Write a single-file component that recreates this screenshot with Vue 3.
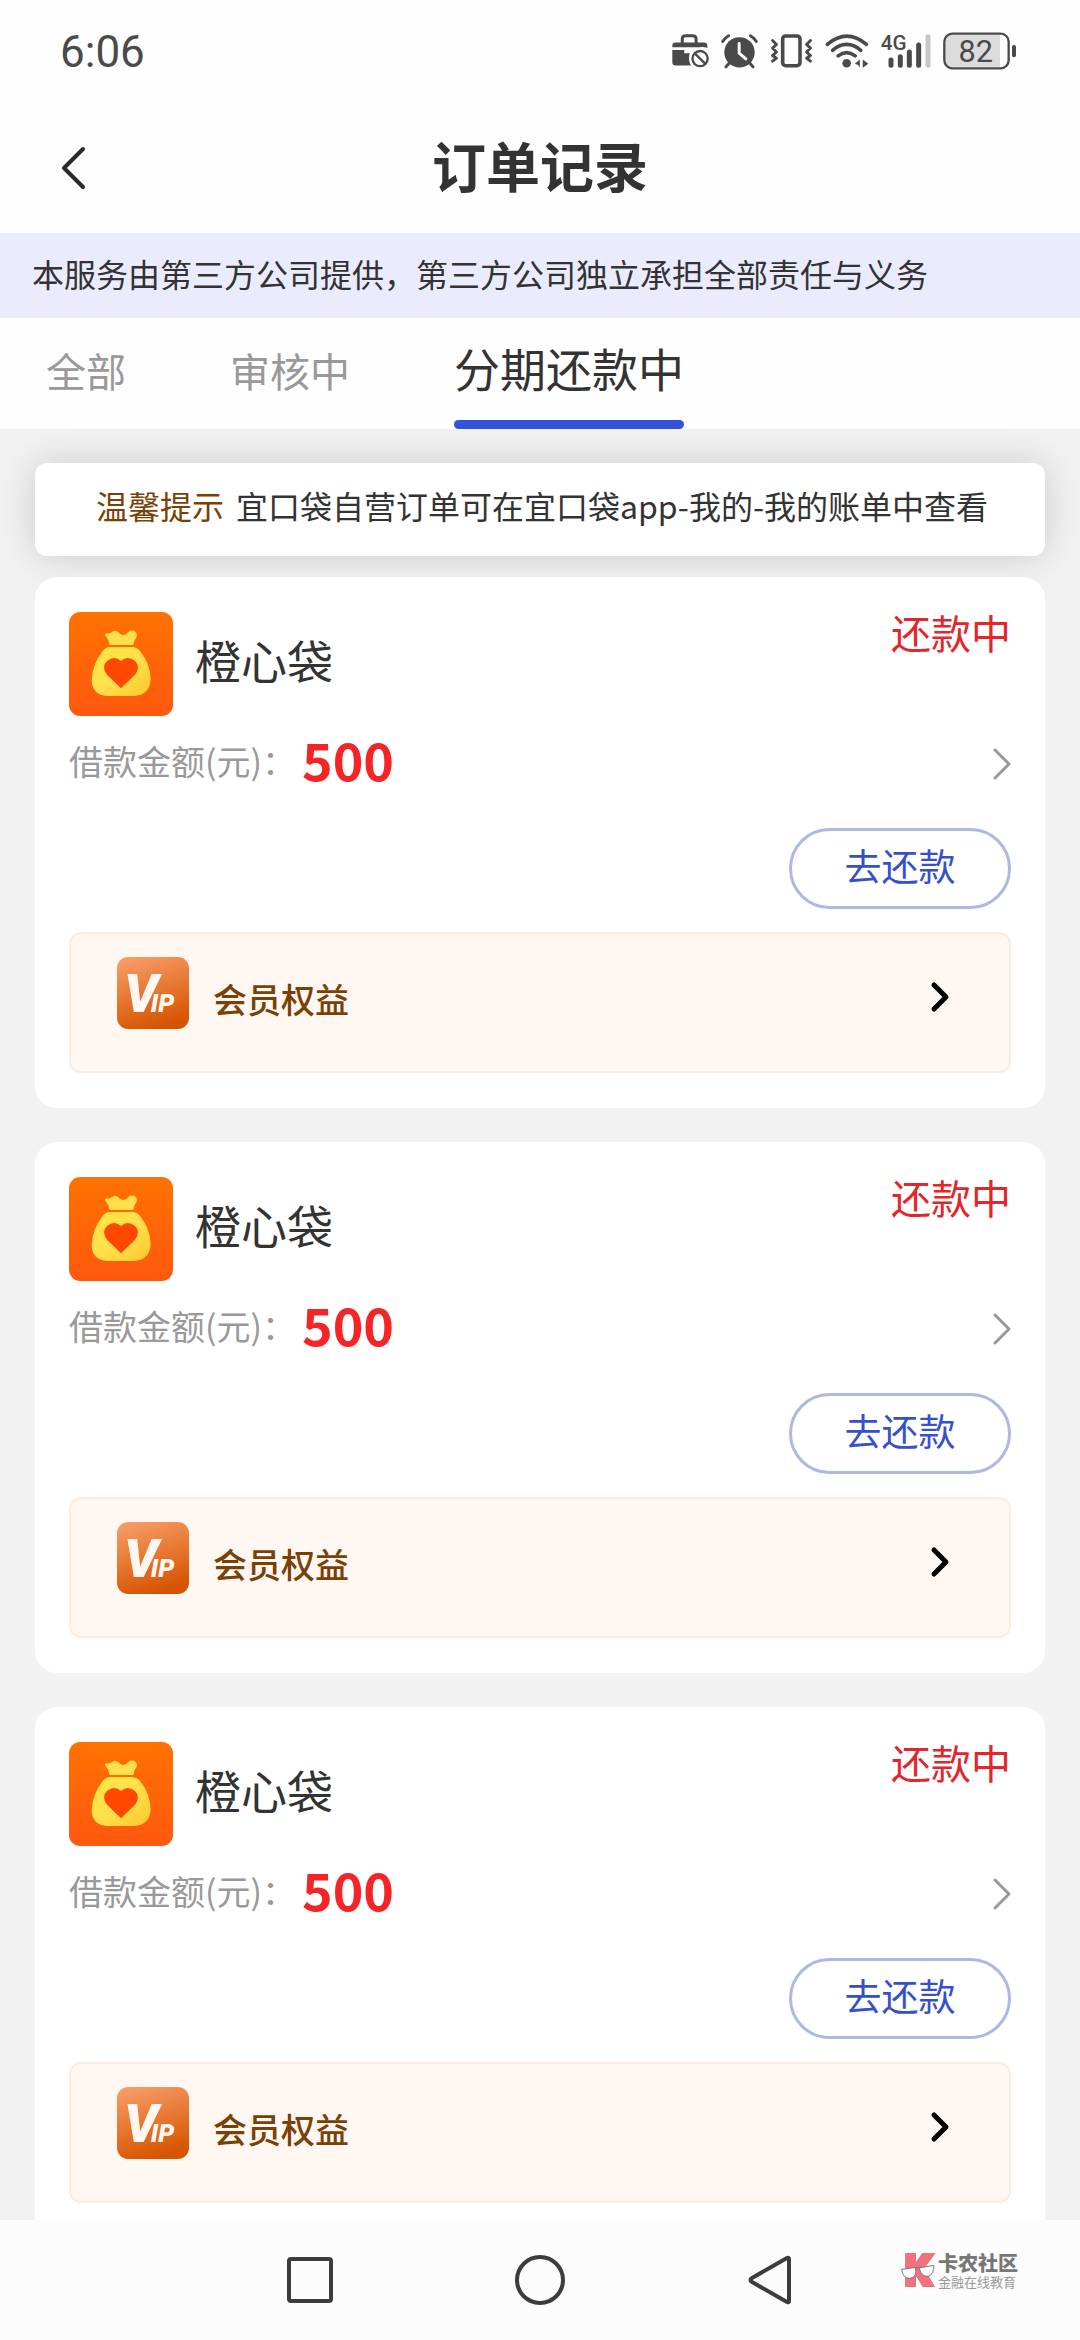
<script setup>
import { ref } from 'vue'

const tabs = ref([
  { id: 'all', label: '全部' },
  { id: 'review', label: '审核中' },
  { id: 'repaying', label: '分期还款中' },
])
const currentTab = ref('repaying')

const orders = ref([
  { id: 1, name: '橙心袋', amount: 500, status: '还款中' },
  { id: 2, name: '橙心袋', amount: 500, status: '还款中' },
  { id: 3, name: '橙心袋', amount: 500, status: '还款中' },
])

function selectTab(id) {
  currentTab.value = id
}
</script>

<template>
  <div class="page">
    <div class="status-bar">
      <span class="time">6:06</span>
      <div class="status-icons">
        <svg class="ic-case" viewBox="98 73 112 102">
          <path d="M129 100V88q0-10 10-10h22q10 0 10 10v12" fill="none" stroke="#4a4a4a" stroke-width="9" />
          <path d="M99 115v-7q0-10 10-10h86q10 0 10 10v7q-12-5-24-2h-82z" fill="#4a4a4a" />
          <path d="M99 121h36v10h17q-7 18 3 37h-46q-10 0-10-10z" fill="#4a4a4a" />
          <circle cx="183" cy="147" r="23" fill="none" stroke="#4a4a4a" stroke-width="7" />
          <path d="M167 131l32 32" stroke="#4a4a4a" stroke-width="7" />
        </svg>
        <svg class="ic-alarm" viewBox="245 70 112 102">
          <circle cx="301" cy="125" r="46" fill="#4a4a4a" />
          <path d="M250 92q6-10 18-17M352 92q-6-10-18-17M272 155l-12 14M330 155l12 14" fill="none" stroke="#4a4a4a" stroke-width="9" stroke-linecap="round" />
          <path d="M300 98v29l20 18" fill="none" stroke="#fff" stroke-width="9" stroke-linecap="round" />
        </svg>
        <svg class="ic-vibrate" viewBox="388 70 130 104">
          <rect x="426" y="76" width="53" height="91" rx="9" fill="none" stroke="#4a4a4a" stroke-width="11" />
          <path d="M395 90l12 12-12 11 12 12-12 11 12 8-12 9M511 90l-12 12 12 11-12 12 12 11-12 8 12 9" fill="none" stroke="#4a4a4a" stroke-width="9" stroke-linejoin="round" stroke-linecap="round" />
        </svg>
        <svg class="ic-wifi" viewBox="552 70 134 102">
          <path d="M559 101q60-50 119 0M575 119q43-36 86 0M592 136q26-20 52 0" fill="none" stroke="#4a4a4a" stroke-width="11" stroke-linecap="round" />
          <circle cx="618" cy="158" r="13" fill="#4a4a4a" />
          <path d="M643 160l15-13v24l-5-7zM667 147l17 13-17 12z" fill="#4a4a4a" />
        </svg>
        <svg class="ic-signal" viewBox="720 68 150 106">
          <text x="719" y="119" class="net-label">4G</text>
          <path d="M750 148v16M778 138v26M805 124v40M833 103v61" stroke="#4a4a4a" stroke-width="15" stroke-linecap="round" />
          <path d="M861 78v86" stroke="#c8c8c8" stroke-width="15" stroke-linecap="round" />
        </svg>
        <svg class="ic-battery" viewBox="905 65 222 112">
          <path d="M930 72h146v98h-146q-18 0-18-20V92q0-20 18-20z" fill="#dcdcdc" />
          <rect x="909" y="69" width="193" height="104" rx="24" fill="none" stroke="#4a4a4a" stroke-width="7" />
          <path d="M1118 109v25" stroke="#4a4a4a" stroke-width="12" stroke-linecap="round" />
          <text x="1003" y="155" text-anchor="middle" class="battery-label">82</text>
        </svg>
      </div>
    </div>

    <header class="header">
      <button class="back" aria-label="返回">
        <svg viewBox="0 0 26 44">
          <path d="M23 3L4 22L23 41" fill="none" stroke="#2a2a2a" stroke-width="4" stroke-linecap="round" stroke-linejoin="round" />
        </svg>
      </button>
      <h1>订单记录</h1>
    </header>

    <p class="notice">本服务由第三方公司提供，第三方公司独立承担全部责任与义务</p>

    <nav class="tabs">
      <button v-for="tab in tabs" :key="tab.id" :class="{ tab: true, active: currentTab === tab.id }" @click="selectTab(tab.id)">
        {{ tab.label }}
      </button>
    </nav>

    <main class="content">
      <p class="tip"><span class="tip-title">温馨提示</span>宜口袋自营订单可在宜口袋app-我的-我的账单中查看</p>

      <section v-for="order in orders" :key="order.id" class="card">
        <div class="card-head">
          <svg class="logo" viewBox="27 36 312 312">
            <defs>
              <linearGradient id="logoBg" x1="0" y1="0" x2="0" y2="1">
                <stop offset="0" stop-color="#ff7200" />
                <stop offset="1" stop-color="#ff580f" />
              </linearGradient>
              <linearGradient id="bag" x1="0" y1="0" x2="1" y2="1">
                <stop offset="0" stop-color="#ffe640" />
                <stop offset="0.5" stop-color="#ffe04c" />
                <stop offset="1" stop-color="#ffc62c" />
              </linearGradient>
            </defs>
            <rect x="27" y="36" width="312" height="312" rx="34" fill="url(#logoBg)" />
            <path d="M148 133q-1-14-12-26q-3-6 4-7q10 2 15-3q8-8 18-2q10 11 18 10q9 0 14-9q8-7 18-3q10 5 7 17q-9 12-9 23q-1 2-5 2h-63q-5 0-5-2z" fill="#ffe04c" />
            <path d="M150 141h68q12 0 22 12q31 38 32 85q-2 46-48 50h-82q-46-3-47-48q2-47 33-87q9-12 22-12z" fill="url(#bag)" />
            <path d="M183 265l-42-41q-18-24 0-41q22-18 42 0q20-18 42 0q18 17 0 41z" fill="#ff4800" />
          </svg>
          <h2>{{ order.name }}</h2>
          <span class="state">{{ order.status }}</span>
        </div>

        <a href="#" class="amount-row">
          <span class="amount-label">借款金额(元)：</span>
          <strong class="amount">{{ order.amount }}</strong>
          <svg class="arrow" viewBox="0 0 18 32">
            <path d="M2 2L16 16L2 30" fill="none" stroke="#999" stroke-width="3" stroke-linecap="round" stroke-linejoin="round" />
          </svg>
        </a>

        <div class="actions">
          <button class="repay">去还款</button>
        </div>

        <a href="#" class="vip">
          <svg class="vip-icon" viewBox="51 51 216 216">
            <defs>
              <linearGradient id="vipBg" x1="0.2" y1="0" x2="0.5" y2="1">
                <stop offset="0" stop-color="#f89c66" />
                <stop offset="1" stop-color="#d65400" />
              </linearGradient>
            </defs>
            <rect x="51" y="51" width="216" height="216" rx="34" fill="url(#vipBg)" />
            <text x="72" y="217" class="vip-big">V<tspan dx="-22" class="vip-small">IP</tspan></text>
          </svg>
          <span class="vip-text">会员权益</span>
          <svg class="vip-arrow" viewBox="0 0 18 30">
            <path d="M3 3L15 15L3 27" fill="none" stroke="#000" stroke-width="5" stroke-linecap="round" stroke-linejoin="round" />
          </svg>
        </a>
      </section>
    </main>

    <footer class="sys-nav">
      <button aria-label="最近任务">
        <svg viewBox="0 0 52 52">
          <rect x="5" y="5" width="42" height="42" rx="2" fill="none" stroke="#3c3c3c" stroke-width="4" />
        </svg>
      </button>
      <button aria-label="主页">
        <svg viewBox="0 0 52 52">
          <circle cx="26" cy="26" r="23" fill="none" stroke="#3c3c3c" stroke-width="4" />
        </svg>
      </button>
      <button aria-label="后退">
        <svg viewBox="0 0 52 52">
          <path d="M45 5V47Q45 49 43 48L8 28Q5 26 8 24L43 4Q45 3 45 5Z" fill="none" stroke="#3c3c3c" stroke-width="4" stroke-linejoin="round" />
        </svg>
      </button>
      <div class="watermark">
        <svg viewBox="118 156 106 110">
          <text x="132" y="255" class="wm-k">K</text>
          <path d="M122 206l43-6q6 30-18 34q-20 0-25-28zM176 201l45-7q0 28-17 33q-21 3-28-26z" fill="#fcfcfc" stroke="#777" stroke-width="3" />
          <path d="M165 203q5-5 11-1" fill="none" stroke="#777" stroke-width="3" />
        </svg>
        <div>
          <div class="wm-name">卡农社区</div>
          <div class="wm-sub">金融在线教育</div>
        </div>
      </div>
    </footer>
  </div>
</template>

<style>
body {
  background: #f2f2f2;
}
</style>

<style scoped>
.page {
  display: flex;
  flex-direction: column;
  height: 100vh;
  font-family: "Noto Sans CJK SC", sans-serif;
  color: #333;
}
button {
  border: 0;
  padding: 0;
  background: none;
  font-family: inherit;
  cursor: pointer;
}
a {
  color: inherit;
  text-decoration: none;
}
h1, h2, p {
  margin: 0;
}
svg {
  display: block;
  flex: none;
  overflow: visible;
}

.status-bar {
  display: flex;
  align-items: center;
  justify-content: space-between;
  height: 102px;
  padding: 0 63px 0 60px;
  background: #fefefe;
}
.time {
  padding-top: 2px;
  font-family: Roboto, sans-serif;
  font-size: 44px;
  color: #4a4a4a;
}
.status-icons {
  display: flex;
  align-items: center;
  gap: 12px;
}
.ic-case, .ic-alarm {
  width: 37px;
  height: 34px;
}
.ic-vibrate {
  width: 43px;
  height: 34px;
}
.ic-wifi {
  width: 44px;
  height: 34px;
}
.ic-signal {
  width: 50px;
  height: 36px;
}
.ic-battery {
  width: 74px;
  height: 38px;
}
.net-label {
  font-family: Roboto, sans-serif;
  font-size: 62px;
  font-weight: 500;
  fill: #4a4a4a;
}
.battery-label {
  font-family: Roboto, sans-serif;
  font-size: 92px;
  fill: #4a4a4a;
}

.header {
  display: grid;
  grid-template-columns: 1fr auto 1fr;
  align-items: center;
  height: 131px;
  padding: 0 60px;
  background: #fefefe;
}
.back {
  justify-self: start;
}
.back svg {
  width: 26px;
  height: 44px;
}
.header h1 {
  padding-bottom: 6px;
  font-size: 54px;
  line-height: 80px;
}

.notice {
  padding: 17px 32px 21px;
  background: #eaecfd;
  font-size: 32px;
  line-height: 47px;
}

.tabs {
  display: flex;
  gap: 104px;
  height: 111px;
  padding: 0 46px;
  background: #fefefe;
}
.tab {
  padding-top: 2px;
  border-bottom: 9px solid transparent;
  font-size: 40px;
  color: #999;
}
.tab.active {
  position: relative;
  padding: 0 0 4px;
  font-size: 46px;
  color: #333;
}
.tab.active::after {
  content: "";
  position: absolute;
  left: 0;
  right: 0;
  bottom: -9px;
  height: 9px;
  border-radius: 5px;
  background: #3451dc;
}

.content {
  flex: 1;
  min-height: 0;
  overflow-y: auto;
  scrollbar-width: none;
  padding: 34px 35px;
}
.tip {
  margin-bottom: 21px;
  padding: 18px 16px 27px 20px;
  border-radius: 12px;
  background: #fff;
  box-shadow: 0 0 40px rgba(0, 0, 0, 0.16);
  text-align: center;
  font-size: 32px;
  line-height: 48px;
}
.tip-title {
  margin-right: 12px;
  color: #7a4107;
}

.card {
  position: relative;
  margin-bottom: 34px;
  padding: 35px 34px;
  border-radius: 22px;
  background: #fff;
}
.card-head {
  display: flex;
  align-items: center;
  height: 104px;
}
.logo {
  width: 104px;
  height: 104px;
}
.card-head h2 {
  margin-left: 22px;
  padding-bottom: 10px;
  font-size: 46px;
  font-weight: 400;
  line-height: 68px;
}
.state {
  align-self: flex-start;
  margin-left: auto;
  font-size: 40px;
  line-height: 40px;
  color: #e3262b;
}
.amount-row {
  display: flex;
  align-items: center;
  height: 96px;
}
.amount-label {
  padding-bottom: 8px;
  font-size: 34px;
  color: #999;
}
.amount {
  margin-left: 6px;
  padding-bottom: 10px;
  font-size: 52px;
  line-height: 80px;
  color: #f52427;
}
.arrow {
  width: 18px;
  height: 32px;
  margin-left: auto;
}
.actions {
  display: flex;
  justify-content: flex-end;
  padding: 16px 0 23px;
}
.repay {
  width: 222px;
  height: 81px;
  padding-bottom: 8px;
  border: 3px solid #adb9e3;
  border-radius: 41px;
  font-size: 37px;
  color: #3650cc;
}
.vip {
  display: flex;
  align-items: center;
  height: 141px;
  box-sizing: border-box;
  padding: 0 60px 12px 46px;
  border: 2px solid #fbece1;
  border-radius: 12px;
  background: #fff7f1;
}
.vip-icon {
  width: 72px;
  height: 72px;
  margin-bottom: 8px;
}
.vip-text {
  margin-left: 24px;
  padding-top: 4px;
  font-size: 34px;
  font-weight: 500;
  color: #7a4107;
}
.vip-big {
  font: italic 900 160px Roboto, sans-serif;
  fill: #fff7f0;
}
.vip-small {
  font-size: 76px;
}
.vip-arrow {
  width: 18px;
  height: 30px;
  margin-left: auto;
}

.sys-nav {
  position: relative;
  display: flex;
  align-items: center;
  justify-content: center;
  gap: 178px;
  height: 120px;
  background: #fcfcfc;
}
.sys-nav button svg {
  width: 52px;
  height: 52px;
}
/* stamp lying over the system bar */
.watermark {
  position: absolute;
  right: 62px;
  top: 32px;
  display: flex;
  align-items: center;
  gap: 3px;
}
.watermark svg {
  width: 35px;
  height: 36px;
}
.wm-k {
  font: 900 128px Roboto, sans-serif;
  fill: #f4707c;
  stroke: #f4707c;
  stroke-width: 10px;
  filter: drop-shadow(0 0 1px #777);
}
.wm-name {
  font-size: 20px;
  font-weight: 900;
  line-height: 22px;
  color: #777;
}
.wm-sub {
  font-size: 13px;
  line-height: 15px;
  color: #999;
}
</style>
